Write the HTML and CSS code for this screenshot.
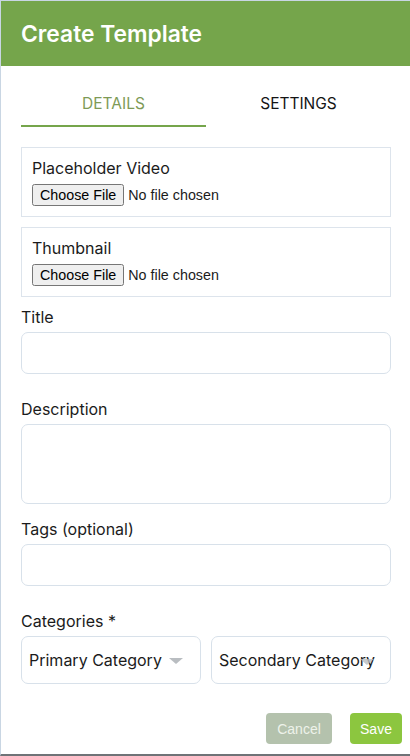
FILE: index.html
```html
<!DOCTYPE html>
<html>
<head>
<meta charset="utf-8">
<link rel="stylesheet" href="styles.css">
</head>
<body>
<div class="page">
  <header class="header"><h1 class="title">Create Template</h1></header>
  <div class="content">
    <div class="tabs">
      <div class="tab active">DETAILS</div>
      <div class="tab">SETTINGS</div>
    </div>
    <div class="file-box">
      <div class="file-label">Placeholder Video</div>
      <input type="file" class="file-input">
    </div>
    <div class="file-box second">
      <div class="file-label">Thumbnail</div>
      <input type="file" class="file-input">
    </div>
    <label class="label label-title">Title</label>
    <div class="input"></div>
    <label class="label label-desc">Description</label>
    <div class="input textarea"></div>
    <label class="label label-tags">Tags (optional)</label>
    <div class="input"></div>
    <label class="label label-cat">Categories *</label>
    <div class="selects">
      <div class="select"><span class="select-text">Primary Category</span><span class="arrow"></span></div>
      <div class="select secondary"><span class="select-text">Secondary Category</span><span class="arrow overlay"></span></div>
    </div>
  </div>
  <div class="actions">
    <button class="btn cancel">Cancel</button>
    <button class="btn save">Save</button>
  </div>
</div>
</body>
</html>
```
FILE: styles.css
```css
* { box-sizing: border-box; }
html, body { margin: 0; padding: 0; }
body { background: #fff; font-family: Inter, "Noto Sans", sans-serif; color: #1b1b1b; }
.page {
  width: 410px;
  height: 756px;
  border-top: 1px solid #c9d6e3;
  border-left: 1px solid #c9d6e3;
  border-bottom: 2px solid #6f7377;
  position: relative;
}
.header {
  height: 65px;
  background: #75a54b;
  display: flex;
  align-items: center;
  padding-left: 20px;
}
.title {
  margin: 0;
  color: #fff;
  font-size: 22.8px;
  font-weight: 600;
  padding-bottom: 1px;
}
.content { padding: 0 19px 0 20px; }
.tabs { display: flex; }
.tab {
  flex: 1;
  text-align: center;
  font-size: 15.5px;
  line-height: 20px;
  padding: 28px 0 11px;
  border-bottom: 2px solid transparent;
  color: #151515;
}
.tab.active { color: #7e9a56; border-bottom-color: #75a54b; }
.file-box {
  margin-top: 20px;
  border: 1px solid #dde4ec;
  padding: 10px 10px 10px 10px;
}
.file-box.second { margin-top: 10px; }
.file-label { font-size: 16px; line-height: 20px; margin-bottom: 6px; }
.file-input { font-family: "Liberation Sans", Arial, sans-serif; font-size: 14.3px; display: block; margin: 0; }
.label { display: block; font-size: 16px; line-height: 20px; }
.label-title { margin-top: 10px; }
.label-desc { margin-top: 25px; }
.label-tags { margin-top: 15px; }
.label-cat { margin-top: 25px; }
.input {
  margin-top: 5px;
  height: 42px;
  border: 1px solid #d8e1ea;
  border-radius: 7px;
}
.input.textarea { height: 80px; }
.selects { display: flex; gap: 10px; margin-top: 5px; }
.select {
  flex: 1;
  height: 48px;
  border: 1px solid #d8e1ea;
  border-radius: 7px;
  display: flex;
  align-items: center;
  padding-left: 7px;
  font-size: 16px;
  white-space: nowrap;
  overflow: hidden;
  position: relative;
}
.arrow {
  width: 0; height: 0;
  border-left: 7px solid transparent;
  border-right: 7px solid transparent;
  border-top: 6px solid #b9bdc1;
  margin-left: 7px;
  margin-top: 2px;
}
.arrow.overlay { position: absolute; right: 16px; top: 22px; margin: 0; opacity: 0.8; }
.actions {
  display: flex;
  justify-content: flex-end;
  gap: 18px;
  padding-right: 8px;
  margin-top: 29px;
}
.btn {
  border: none;
  border-radius: 4px;
  color: #fff;
  font-family: "Liberation Sans", Arial, sans-serif;
  font-size: 14px;
  height: 31px;
  padding: 0;
}
.cancel { width: 66px; background: #b4c2ad; color: #eef2ea; }
.save { width: 52px; background: #8cc63f; }
```
